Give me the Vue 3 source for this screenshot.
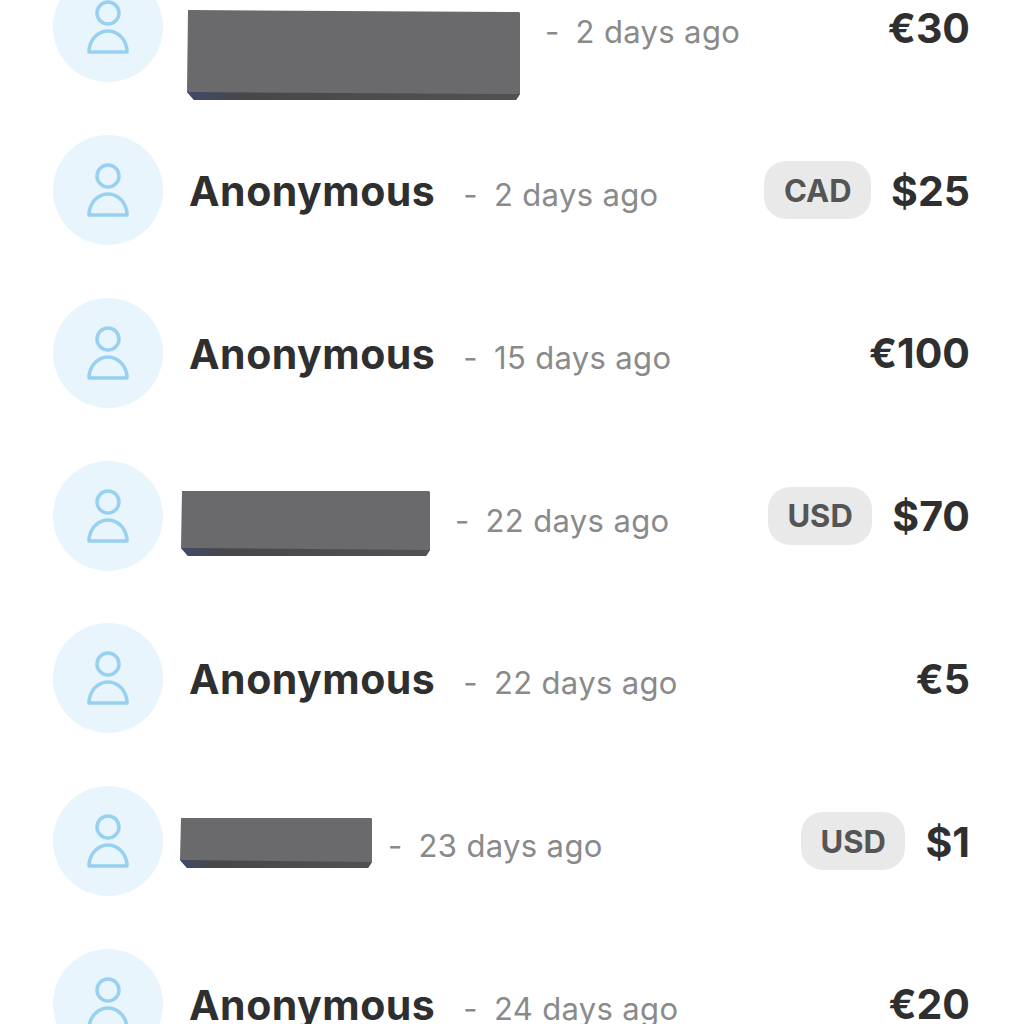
<script setup>
const rows = [
  { redact: { w: 333, h: 90, shift: 56, left: -2, after: 25, top: 2 }, time: '2 days ago', amount: '€30' },
  { name: 'Anonymous', time: '2 days ago', cur: 'CAD', amount: '$25' },
  { name: 'Anonymous', time: '15 days ago', amount: '€100' },
  { redact: { w: 249, h: 65, shift: 15, left: -8, after: 25, top: 0 }, time: '22 days ago', cur: 'USD', amount: '$70' },
  { name: 'Anonymous', time: '22 days ago', amount: '€5' },
  { redact: { w: 192, h: 50, shift: 4, left: -9, after: 16, top: 0 }, time: '23 days ago', cur: 'USD', amount: '$1' },
  { name: 'Anonymous', time: '24 days ago', amount: '€20' },
]
const shape = (r) => `1,0 ${r.w - 1},${r.top} ${r.w},${r.top + 1} ${r.w},${r.h - 6} ${r.w - 4},${r.h} 7,${r.h} 0,${r.h - 8}`
const band = (r) => `0,${r.h - 8} ${r.w},${r.h - 6} ${r.w - 4},${r.h} 7,${r.h}`
</script>

<template>
  <main class="page">
    <ul class="list">
      <li v-for="(row, i) in rows" :key="i" class="row">
        <span class="avatar">
          <svg viewBox="0 0 44 54" width="44" height="54" fill="none" stroke="#97d0f0" stroke-width="3.5" stroke-linejoin="round">
            <circle cx="22" cy="13" r="11" />
            <path d="M3 52A19 21 0 0 1 41 52Z" />
          </svg>
        </span>
        <span v-if="row.name" class="name">{{ row.name }}</span>
        <svg
          v-else
          class="redact"
          :width="row.redact.w"
          :height="row.redact.h"
          :style="{ marginTop: row.redact.shift + 'px', marginLeft: row.redact.left + 'px', marginRight: row.redact.after - 28 + 'px' }"
        >
          <defs>
            <linearGradient :id="'band' + i">
              <stop offset="0" stop-color="#3f4a6a" />
              <stop offset="0.16" stop-color="#47474b" />
              <stop offset="1" stop-color="#525254" />
            </linearGradient>
          </defs>
          <polygon :points="shape(row.redact)" fill="#6a6a6c" />
          <polygon :points="band(row.redact)" :fill="'url(#band' + i + ')'" />
        </svg>
        <span class="time"><span class="dash">-</span>{{ row.time }}</span>
        <span v-if="row.cur" class="pill">{{ row.cur }}</span>
        <span class="amount">{{ row.amount }}</span>
      </li>
    </ul>
  </main>
</template>

<style>
html, body { margin: 0; background: #fff; }
</style>

<style scoped>
.page {
  width: 1024px;
  height: 1024px;
  overflow: hidden;
  background: #fff;
  font-family: Inter, "Liberation Sans", sans-serif;
}
.list {
  list-style: none;
  margin: -54px 0 0;
  padding: 0 54px 0 53px;
}
.row {
  display: flex;
  align-items: center;
  height: 162.75px;
}
.avatar {
  flex: none;
  width: 110px;
  height: 110px;
  border-radius: 50%;
  background: #e8f5fc;
  display: flex;
  align-items: center;
  justify-content: center;
  margin-right: 26px;
}
.name {
  font-size: 41px;
  font-weight: 700;
  letter-spacing: 0.5px;
  color: #2f2f2f;
  margin-top: 2px;
}
.redact { flex: none; }
.time {
  margin-left: 28px;
  margin-top: 9px;
  font-size: 31px;
  letter-spacing: 0.35px;
  color: #8a8a8a;
  margin-right: auto;
}
.dash { margin-right: 16px; }
.pill {
  flex: none;
  height: 58px;
  padding: 0 19.5px;
  margin-right: 20px;
  border-radius: 22px;
  background: #e9e9e9;
  color: #555;
  font-size: 31px;
  font-weight: 700;
  display: flex;
  align-items: center;
}
.amount {
  font-size: 41px;
  font-weight: 700;
  color: #2f2f2f;
  margin-top: 1px;
}
</style>
